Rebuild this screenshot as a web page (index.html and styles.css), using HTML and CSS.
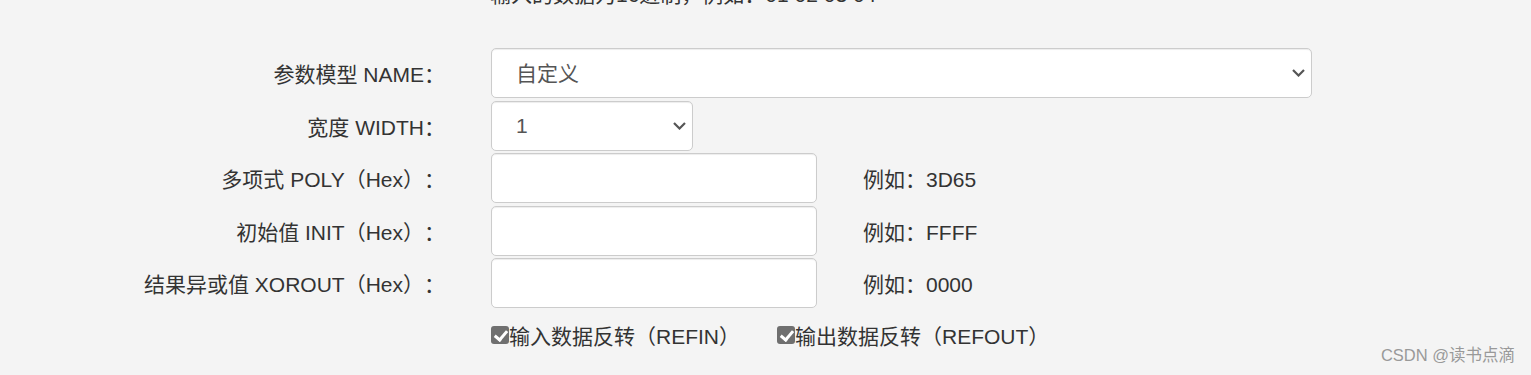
FILE: index.html
```html
<!DOCTYPE html>
<html lang="zh-CN">
<head>
    <meta charset="UTF-8">
    <title>CRC 计算</title>
    <link rel="stylesheet" href="styles.css">
</head>
<body>
    <div class="page">
        <p class="tip">输入的数据为16进制，例如：01 02 03 04</p>

        <form class="crc-form">
            <!-- 参数模型 -->
            <div class="row">
                <label class="row-label">参数模型 NAME：</label>
                <div class="control">
                    <div class="select-wrap select-wide">
                        <select class="field">
                            <option>自定义</option>
                        </select>
                        <svg class="chevron" width="13" height="8" viewBox="0 0 13 8"><path d="M1 1l5.5 5.5L12 1"/></svg>
                    </div>
                </div>
            </div>

            <div class="row">
                <label class="row-label">宽度 WIDTH：</label>
                <div class="control">
                    <div class="select-wrap select-small">
                        <select class="field">
                            <option>1</option>
                        </select>
                        <svg class="chevron" width="13" height="8" viewBox="0 0 13 8"><path d="M1 1l5.5 5.5L12 1"/></svg>
                    </div>
                </div>
            </div>

            <div class="row">
                <label class="row-label">多项式 POLY（Hex）：</label>
                <div class="control">
                    <input class="field field-hex" type="text">
                    <span class="hint">例如：3D65</span>
                </div>
            </div>

            <div class="row">
                <label class="row-label">初始值 INIT（Hex）：</label>
                <div class="control">
                    <input class="field field-hex" type="text">
                    <span class="hint">例如：FFFF</span>
                </div>
            </div>

            <div class="row">
                <label class="row-label">结果异或值 XOROUT（Hex）：</label>
                <div class="control">
                    <input class="field field-hex" type="text">
                    <span class="hint">例如：0000</span>
                </div>
            </div>

            <!-- 反转选项 -->
            <div class="row row-checks">
                <div class="row-label"></div>
                <div class="control">
                    <label class="check"><input type="checkbox" checked>输入数据反转（REFIN）</label>
                    <label class="check"><input type="checkbox" checked>输出数据反转（REFOUT）</label>
                </div>
            </div>
        </form>
    </div>

    <div class="watermark">CSDN @读书点滴</div>
</body>
</html>
```

FILE: styles.css
```css
* {
    margin: 0;
    padding: 0;
    box-sizing: border-box;
}

body {
    background: #f4f4f4;
    color: #333;
    font-family: "Liberation Sans", "Noto Sans CJK SC", sans-serif;
    font-size: 21px;
    text-spacing-trim: space-all;
    height: 375px;
    overflow: hidden;
    position: relative;
}

.tip {
    margin: -19px 0 0 490px;
    line-height: 28px;
}

.crc-form {
    margin-top: 39px;
}

.row {
    display: flex;
    align-items: center;
    margin-bottom: 2.5px;
}

.row-label {
    width: 445px;
    text-align: right;
    flex-shrink: 0;
}

.control {
    margin-left: 46px;
    display: flex;
    align-items: center;
}

.field {
    height: 50px;
    border: 1px solid #ccc;
    border-radius: 5px;
    background: #fff;
    box-shadow: inset 0 1px 1px rgba(0, 0, 0, 0.075);
    font-family: inherit;
    font-size: 21px;
    color: #555;
    padding: 0 24px;
    outline: none;
}

.select-wrap {
    position: relative;
}

.select-wrap select {
    appearance: none;
    -webkit-appearance: none;
    width: 100%;
}

.select-wide {
    width: 821px;
}

.select-small {
    width: 202px;
}

.chevron {
    position: absolute;
    right: 7px;
    top: 21px;
    fill: none;
    stroke: #555;
    stroke-width: 2.2;
    pointer-events: none;
}

.field-hex {
    width: 326px;
}

.hint {
    margin-left: 46px;
}

.row-checks {
    margin-top: 12px;
}

.check {
    display: flex;
    align-items: center;
    margin-right: 37px;
}

.check input {
    appearance: none;
    -webkit-appearance: none;
    width: 18px;
    height: 18px;
    border-radius: 3px;
    background: #6f6f6f;
    position: relative;
}

.check input:checked::after {
    content: "";
    position: absolute;
    left: 6px;
    top: 2px;
    width: 5px;
    height: 10px;
    border: solid #fff;
    border-width: 0 3px 3px 0;
    transform: rotate(40deg);
}

.watermark {
    position: absolute;
    right: 16px;
    bottom: 9px;
    font-size: 16.5px;
    color: #999;
}
```
